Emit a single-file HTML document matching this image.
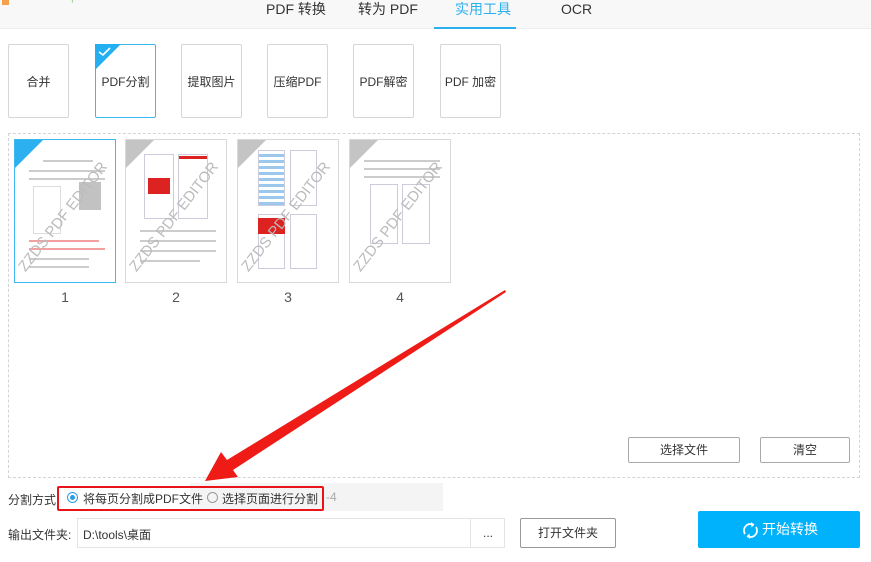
<!DOCTYPE html>
<html><head><meta charset="utf-8"><style>
*{margin:0;padding:0;box-sizing:border-box}
body{width:871px;height:562px;background:#fff;position:relative;overflow:hidden;font-family:"Liberation Sans","Noto Sans CJK SC",sans-serif;color:#333;font-size:12px}
.abs{position:absolute}
.hdr{left:0;top:0;width:871px;height:29px;background:#f8f8f8;border-bottom:1px solid #eee}
.tab{top:0;height:29px;line-height:18px;font-size:14px;color:#333}
.tool{top:44px;width:61px;height:74px;border:1px solid #d6d6d6;border-radius:2px;text-align:center;line-height:74px;font-size:12px;color:#333;background:#fff}
.dash{left:8px;top:133px;width:852px;height:345px;border:1px dashed #d4d4d4}
.th{top:139px;width:102px;height:144px;border:1px solid #d8d8d8;background:#fff;overflow:hidden}
.th .tri{position:absolute;left:0;top:0;width:0;height:0;border-top:28px solid #c4c4c4;border-right:28px solid transparent}
.th .wm{position:absolute;left:-22px;top:62px;width:150px;transform:rotate(-52deg);font-size:15px;color:#bbb;white-space:nowrap}
.ln{position:absolute;height:2px;background:#ccc}
.num{top:289px;width:102px;text-align:center;font-size:14px;color:#555}
.btn{border:1px solid #a9a9a9;border-radius:2px;background:#fff;text-align:center;font-size:12px;color:#333}
</style></head><body>
<div class="abs hdr"></div>
<div class="abs" style="left:2px;top:0;width:7px;height:5px;background:#f5a04a"></div>
<div class="abs" style="left:40px;top:-12px;font-size:13px;color:#9ad48a">www.pc6.com</div>
<div class="abs tab" style="left:266px;">PDF 转换</div>
<div class="abs tab" style="left:358px;">转为 PDF</div>
<div class="abs tab" style="left:455px;color:#2cb0ef">实用工具</div>
<div class="abs tab" style="left:561px;">OCR</div>
<div class="abs" style="left:434px;top:27px;width:82px;height:2px;background:#2cb0ef"></div>

<div class="abs tool" style="left:8px">合并</div>
<div class="abs tool" style="left:95px;border:1px solid #3db8f0">PDF分割</div>
<div class="abs" style="left:95px;top:44px;width:0;height:0;border-top:26px solid #25aff0;border-right:26px solid transparent"></div>
<svg class="abs" style="left:98px;top:46px" width="14" height="12"><path d="M1 6 L5 9 L12 2" stroke="#fff" stroke-width="1.6" fill="none"/></svg>
<div class="abs tool" style="left:181px">提取图片</div>
<div class="abs tool" style="left:267px">压缩PDF</div>
<div class="abs tool" style="left:353px">PDF解密</div>
<div class="abs tool" style="left:440px">PDF 加密</div>

<div class="abs dash"></div>

<div class="abs th" style="left:14px;border-color:#3db8f0"><div class="tri" style="border-top-color:#2cb0ef"></div>
<div class="ln" style="left:28px;top:20px;width:50px"></div><div class="ln" style="left:14px;top:30px;width:76px"></div><div class="ln" style="left:14px;top:38px;width:76px"></div>
<div style="position:absolute;left:18px;top:46px;width:28px;height:48px;border:1px solid #ddd"></div><div style="position:absolute;left:64px;top:42px;width:22px;height:28px;background:#999;opacity:.6"></div>
<div class="ln" style="left:14px;top:100px;width:70px;background:#f3a0a0"></div><div class="ln" style="left:14px;top:108px;width:76px;background:#f3a0a0"></div><div class="ln" style="left:14px;top:118px;width:60px"></div><div class="ln" style="left:14px;top:126px;width:60px"></div>
<div class="wm">ZZDS PDF EDITOR</div></div>
<div class="abs th" style="left:125px"><div class="tri"></div>
<div style="position:absolute;left:18px;top:14px;width:30px;height:65px;border:1px solid #ccd"></div><div style="position:absolute;left:22px;top:38px;width:22px;height:16px;background:#d22"></div><div style="position:absolute;left:52px;top:14px;width:30px;height:65px;border:1px solid #ccd"></div><div style="position:absolute;left:53px;top:16px;width:28px;height:3px;background:#d22"></div>
<div class="ln" style="left:14px;top:90px;width:76px"></div><div class="ln" style="left:14px;top:100px;width:76px"></div><div class="ln" style="left:14px;top:110px;width:76px"></div><div class="ln" style="left:14px;top:120px;width:60px"></div>
<div class="wm">ZZDS PDF EDITOR</div></div>
<div class="abs th" style="left:237px"><div class="tri"></div>
<div style="position:absolute;left:20px;top:10px;width:27px;height:56px;border:1px solid #ccd;background:repeating-linear-gradient(#fff 0 3px,#9cc8ee 3px 6px)"></div><div style="position:absolute;left:52px;top:10px;width:27px;height:56px;border:1px solid #ccd"></div>
<div style="position:absolute;left:20px;top:74px;width:27px;height:55px;border:1px solid #ccd"></div><div style="position:absolute;left:20px;top:78px;width:27px;height:16px;background:#d22"></div><div style="position:absolute;left:52px;top:74px;width:27px;height:55px;border:1px solid #ccd"></div>
<div class="wm">ZZDS PDF EDITOR</div></div>
<div class="abs th" style="left:349px"><div class="tri"></div>
<div class="ln" style="left:14px;top:20px;width:76px"></div><div class="ln" style="left:14px;top:28px;width:76px"></div><div class="ln" style="left:14px;top:36px;width:76px"></div>
<div style="position:absolute;left:20px;top:44px;width:28px;height:60px;border:1px solid #ccd"></div><div style="position:absolute;left:52px;top:44px;width:28px;height:60px;border:1px solid #ccd"></div>
<div class="wm">ZZDS PDF EDITOR</div></div>
<div class="abs num" style="left:14px">1</div><div class="abs num" style="left:125px">2</div><div class="abs num" style="left:237px">3</div><div class="abs num" style="left:349px">4</div>

<div class="abs btn" style="left:628px;top:437px;width:112px;height:26px;line-height:24px">选择文件</div>
<div class="abs btn" style="left:760px;top:437px;width:90px;height:26px;line-height:24px">清空</div>

<div class="abs" style="left:190px;top:483px;width:253px;height:28px;background:#f4f4f4"></div>
<div class="abs" style="left:326px;top:490px;color:#aaa;font-size:12px">-4</div>
<div class="abs" style="left:8px;top:491px;font-size:12px">分割方式:</div>
<div class="abs" style="left:57px;top:486px;width:267px;height:25px;border:2px solid #e8141a;border-radius:2px"></div>
<div class="abs" style="left:67px;top:492px;width:11px;height:11px;border:1px solid #2a9de6;border-radius:50%"></div>
<div class="abs" style="left:70px;top:495px;width:5px;height:5px;background:#2a9de6;border-radius:50%"></div>
<div class="abs" style="left:83px;top:490px;font-size:12px">将每页分割成PDF文件</div>
<div class="abs" style="left:207px;top:492px;width:11px;height:11px;border:1px solid #999;border-radius:50%"></div>
<div class="abs" style="left:222px;top:490px;font-size:12px">选择页面进行分割</div>

<div class="abs" style="left:8px;top:526px;font-size:12px">输出文件夹:</div>
<div class="abs" style="left:77px;top:518px;width:428px;height:30px;border:1px solid #e4e4e4"></div>
<div class="abs" style="left:470px;top:518px;width:1px;height:30px;background:#e4e4e4"></div>
<div class="abs" style="left:83px;top:526px;font-size:12px">D:\tools\桌面</div>
<div class="abs" style="left:483px;top:526px;font-size:12px">...</div>
<div class="abs btn" style="left:520px;top:518px;width:96px;height:30px;line-height:28px;border-color:#999">打开文件夹</div>
<div class="abs" style="left:698px;top:511px;width:162px;height:37px;background:#00b1fc;border-radius:2px;color:#fff;font-size:14px;line-height:37px;padding-left:64px">开始转换</div>
<svg class="abs" style="left:741px;top:521px" width="19" height="19" viewBox="0 0 19 19"><path d="M4 13 A6.5 6.5 0 0 1 12 3.5" stroke="#fff" stroke-width="1.8" fill="none"/><path d="M15 6 A6.5 6.5 0 0 1 7 15.5" stroke="#fff" stroke-width="1.8" fill="none"/><path d="M10 1 L13.5 3.6 L10.5 6.5Z M9 18 L5.5 15.4 L8.5 12.5Z" fill="#fff"/></svg>

<svg class="abs" style="left:0;top:0" width="871" height="562"><polygon points="505,290 506,292 233,470 238,477 205,481 221,452 227,460" fill="#ef1b16"/></svg>
</body></html>
